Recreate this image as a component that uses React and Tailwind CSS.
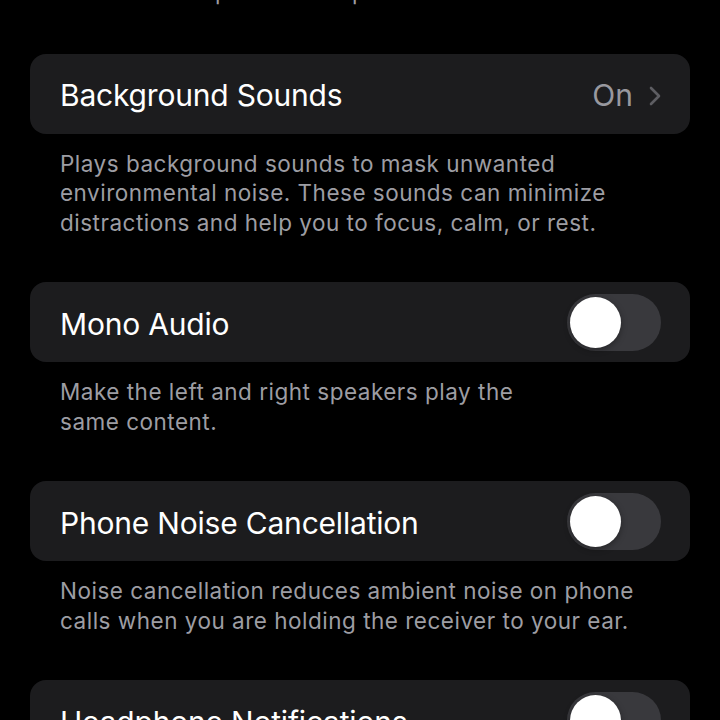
import React from 'react'

const font = { fontFamily: 'Inter, "Noto Sans", sans-serif' }

function Toggle() {
  return (
    <div className="w-[94px] h-[57px] rounded-full bg-[#39393d] p-[3px] flex items-center shrink-0">
      <div className="w-[51px] h-[51px] rounded-full bg-white shadow-[0_2px_6px_rgba(0,0,0,0.35)]" />
    </div>
  )
}

function Row({ title, right }) {
  return (
    <div className="mx-[30px] h-[80px] rounded-[16px] bg-[#1c1c1e] flex items-center justify-between pl-[30px] pr-[29px]">
      <span className="pt-[4px] text-[30px] tracking-[-0.2px] text-white">{title}</span>
      {right}
    </div>
  )
}

function Note({ children }) {
  return (
    <p className="px-[60px] pt-[15px] pb-[45px] text-[22.5px] leading-[29.5px] tracking-[0.5px] text-[#9d9da3]">
      {children}
    </p>
  )
}

export default function App() {
  return (
    <div className="w-[720px] h-[720px] overflow-hidden bg-black" style={font}>
      <p className="-mt-[23px] px-[46px] pb-[47px] text-[22.5px] leading-[29.5px] tracking-[0.5px] text-[#9d9da3]">
        audio with compatible headphones. <span className="text-[#2f3a8a]">Learn more…</span>
      </p>

      <Row
        title="Background Sounds"
        right={
          <div className="flex items-center gap-[16px] pt-[4px]">
            <span className="text-[30px] text-[#98989f]">On</span>
            <svg width="12" height="20" viewBox="0 0 12 20" fill="none">
              <path d="M2 2l8 8-8 8" stroke="#5d5d62" strokeWidth="2.6" strokeLinecap="round" strokeLinejoin="round" />
            </svg>
          </div>
        }
      />
      <Note>
        Plays background sounds to mask unwanted<br />
        environmental noise. These sounds can minimize<br />
        distractions and help you to focus, calm, or rest.
      </Note>

      <Row title="Mono Audio" right={<Toggle />} />
      <Note>
        Make the left and right speakers play the<br />
        same content.
      </Note>

      <Row title="Phone Noise Cancellation" right={<Toggle />} />
      <Note>
        Noise cancellation reduces ambient noise on phone<br />
        calls when you are holding the receiver to your ear.
      </Note>

      <Row title="Headphone Notifications" right={<Toggle />} />
    </div>
  )
}
